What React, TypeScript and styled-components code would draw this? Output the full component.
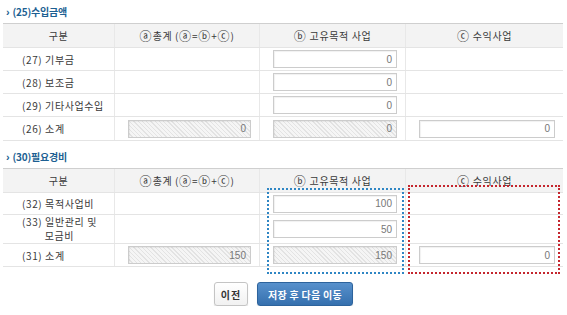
import styled, { createGlobalStyle } from 'styled-components';

const GlobalStyle = createGlobalStyle`
	html, body {
		margin: 0;
		padding: 0;
		background: #ffffff;
	}
	body {
		font-family: 'Noto Sans CJK KR', 'Liberation Sans', sans-serif;
		color: #333333;
	}
`;

const COLS = '112px 145px 146px 157px';

const Page = styled.div`
	width: 567px;
	padding: 0 4px 0 3px;
	box-sizing: border-box;
`;

const Section = styled.section<{ $gap?: number }>`
	position: relative;
	margin-top: ${(p) => p.$gap || 0}px;
`;

const SectionTitle = styled.h2`
	margin: 0;
	height: 23px;
	display: flex;
	align-items: center;
	gap: 2px;
	padding-left: 3px;
	font-size: 10px;
	font-weight: bold;
	color: #1d5f92;
	letter-spacing: -0.2px;
`;

const Arrow = styled.span`
	font-family: 'Liberation Sans', sans-serif;
	font-size: 11px;
	font-weight: bold;
	margin-right: 1px;
`;

const Table = styled.div`
	border-top: 1px solid #cfcfcf;
`;

const Row = styled.div<{ $h: number; $head?: boolean }>`
	display: grid;
	grid-template-columns: ${COLS};
	height: ${(p) => p.$h}px;
	box-sizing: border-box;
	border-bottom: 1px solid #e4e4e4;
	background: ${(p) => (p.$head ? '#f3f3f3' : '#ffffff')};
`;

const Cell = styled.div<{ $head?: boolean; $label?: boolean }>`
	display: flex;
	align-items: center;
	justify-content: ${(p) => (p.$label && !p.$head ? 'flex-start' : 'center')};
	padding: ${(p) => (p.$label && !p.$head ? '0 0 0 19px' : p.$head ? '0' : '0 8px 0 13px')};
	border-right: 1px solid #e8e8e8;
	font-size: 10px;
	color: #3a3a3a;
	letter-spacing: 0.6px;
	white-space: nowrap;
	&:last-child {
		border-right: none;
	}
`;

const Circled = styled.span`
	font-size: 12px;
	letter-spacing: 0;
	margin-right: 1px;
`;

const LabelLines = styled.div`
	display: flex;
	flex-direction: column;
	align-items: center;
	line-height: 14px;
`;

const NumBox = styled.div<{ $readonly?: boolean }>`
	flex: 1;
	height: 18px;
	box-sizing: border-box;
	border: 1px solid #cccccc;
	padding: 0 4px;
	display: flex;
	align-items: center;
	justify-content: flex-end;
	font-family: 'Liberation Sans', sans-serif;
	font-size: 10px;
	letter-spacing: 0;
	color: #777777;
	box-shadow: inset 1px 1px 1px rgba(0, 0, 0, 0.06);
	background: ${(p) =>
		p.$readonly
			? 'repeating-linear-gradient(45deg, #f5f5f5 0px, #f5f5f5 2px, #e3e3e3 2px, #e3e3e3 3px)'
			: '#ffffff'};
`;

const Marker = styled.div<{ $color: string; $top: number; $left: number; $w: number; $h: number }>`
	position: absolute;
	top: ${(p) => p.$top}px;
	left: ${(p) => p.$left}px;
	width: ${(p) => p.$w}px;
	height: ${(p) => p.$h}px;
	box-sizing: border-box;
	border: 2px dotted ${(p) => p.$color};
	pointer-events: none;
`;

const Actions = styled.div`
	display: flex;
	justify-content: center;
	gap: 9px;
	margin-top: 15px;
	padding-left: 1px;
`;

const Button = styled.button<{ $primary?: boolean }>`
	height: 24px;
	width: ${(p) => (p.$primary ? 96 : 34)}px;
	padding: 0;
	border-radius: 3px;
	font-family: 'Noto Sans CJK KR', sans-serif;
	font-size: 10px;
	font-weight: bold;
	letter-spacing: ${(p) => (p.$primary ? 0.3 : 1)}px;
	cursor: pointer;
	border: 1px solid ${(p) => (p.$primary ? '#2d639c' : '#c4c4c4')};
	color: ${(p) => (p.$primary ? '#ffffff' : '#333333')};
	background: ${(p) =>
		p.$primary ? 'linear-gradient(#5891cc, #3570ae)' : 'linear-gradient(#ffffff, #f1f1f1)'};
	box-shadow: 0 1px 1px rgba(0, 0, 0, 0.15);
`;

type Line = { label: string; lines?: string[]; a?: string; b?: string; c?: string; h: number; sum?: boolean };

const income: Line[] = [
	{ label: '(27) 기부금', b: '0', h: 23 },
	{ label: '(28) 보조금', b: '0', h: 23 },
	{ label: '(29) 기타사업수입', b: '0', h: 23 },
	{ label: '(26) 소계', a: '0', b: '0', c: '0', h: 24, sum: true },
];

const expense: Line[] = [
	{ label: '(32) 목적사업비', b: '100', h: 22 },
	{ label: '(33) 일반관리 및', lines: ['(33) 일반관리 및', '모금비'], b: '50', h: 29 },
	{ label: '(31) 소계', a: '150', b: '150', c: '0', h: 23, sum: true },
];

function HeaderRow() {
	return (
		<Row $h={24} $head>
			<Cell $head>구분</Cell>
			<Cell $head>
				<Circled>ⓐ</Circled>총계 (<Circled>ⓐ</Circled>=<Circled>ⓑ</Circled>+<Circled>ⓒ</Circled>)
			</Cell>
			<Cell $head>
				<Circled>ⓑ</Circled>&nbsp;고유목적 사업
			</Cell>
			<Cell $head>
				<Circled>ⓒ</Circled>&nbsp;수익사업
			</Cell>
		</Row>
	);
}

function AmountTable(props: { rows: Line[] }) {
	return (
		<Table>
			<HeaderRow />
			{props.rows.map((r) => (
				<Row key={r.label} $h={r.h}>
					<Cell $label>
						{r.lines ? (
							<LabelLines>
								{r.lines.map((l) => (
									<span key={l}>{l}</span>
								))}
							</LabelLines>
						) : (
							r.label
						)}
					</Cell>
					<Cell>{r.a !== undefined && <NumBox $readonly>{r.a}</NumBox>}</Cell>
					<Cell>{r.b !== undefined && <NumBox $readonly={r.sum}>{r.b}</NumBox>}</Cell>
					<Cell>{r.c !== undefined && <NumBox>{r.c}</NumBox>}</Cell>
				</Row>
			))}
		</Table>
	);
}

export default function App() {
	return (
		<Page>
			<GlobalStyle />
			<Section>
				<SectionTitle>
					<Arrow>›</Arrow>(25)수입금액
				</SectionTitle>
				<AmountTable rows={income} />
			</Section>
			<Section $gap={4}>
				<SectionTitle>
					<Arrow>›</Arrow>(30)필요경비
				</SectionTitle>
				<AmountTable rows={expense} />
				<Marker $color="#2f86c4" $top={43} $left={264} $w={137} $h={86} />
				<Marker $color="#c4262e" $top={40} $left={405} $w={152} $h={89} />
			</Section>
			<Actions>
				<Button>이전</Button>
				<Button $primary>저장 후 다음 이동</Button>
			</Actions>
		</Page>
	);
}
